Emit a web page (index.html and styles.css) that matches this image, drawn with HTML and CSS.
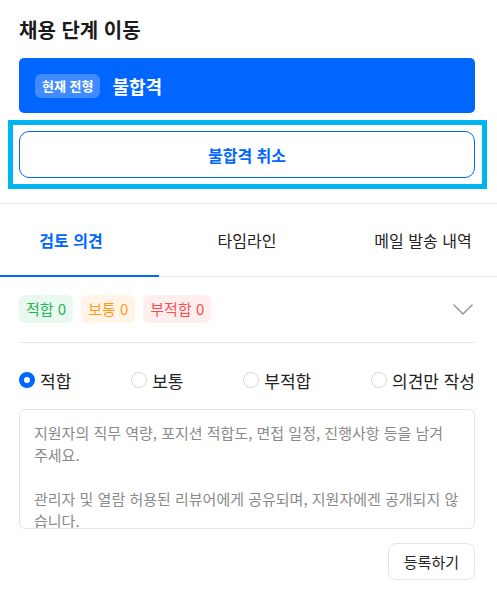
FILE: index.html
```html
<!DOCTYPE html>
<html lang="ko">
<head>
<meta charset="utf-8">
<title>채용 단계 이동</title>
<link rel="stylesheet" href="styles.css">
</head>
<body>
<section class="top">
  <h2 class="title">채용 단계 이동</h2>
  <div class="stage">
    <span class="badge">현재 전형</span>
    <span class="stage-name">불합격</span>
  </div>
  <div class="highlight">
    <button class="cancel" type="button">불합격 취소</button>
  </div>
</section>

<nav class="tabs">
  <div class="tab-row">
    <div class="tab active">검토 의견</div>
    <div class="tab">타임라인</div>
    <div class="tab">메일 발송 내역</div>
  </div>
</nav>

<section class="review">
  <div class="summary">
    <span class="chip chip-good">적합 0</span>
    <span class="chip chip-normal">보통 0</span>
    <span class="chip chip-bad">부적합 0</span>
    <svg class="chevron" width="24" height="24" viewBox="0 0 24 24" aria-hidden="true">
      <polyline points="3,8 12,17 21,8" fill="none" stroke="#9a9a9a" stroke-width="1.6" stroke-linecap="round" stroke-linejoin="round"/>
    </svg>
  </div>
  <hr class="divider">
  <div class="options">
    <label class="option"><input type="radio" name="opinion" checked><span>적합</span></label>
    <label class="option"><input type="radio" name="opinion"><span>보통</span></label>
    <label class="option"><input type="radio" name="opinion"><span>부적합</span></label>
    <label class="option"><input type="radio" name="opinion"><span>의견만 작성</span></label>
  </div>
  <div class="memo">지원자의 직무 역량, 포지션 적합도, 면접 일정, 진행사항 등을 남겨
주세요.

관리자 및 열람 허용된 리뷰어에게 공유되며, 지원자에겐 공개되지 않
습니다.</div>
  <div class="actions">
    <button class="submit" type="button">등록하기</button>
  </div>
</section>
</body>
</html>
```

FILE: styles.css
```css
* { box-sizing: border-box; }

body {
  margin: 0;
  background: #ffffff;
  color: #222222;
  font-family: "Noto Sans CJK KR", "Noto Sans", sans-serif;
}

.top {
  padding: 17px 22px 0 19px;
}

.title {
  margin: 0;
  font-size: 20px;
  line-height: 26px;
  font-weight: 700;
  color: #1a1a1a;
}

.stage {
  margin-top: 15px;
  height: 55px;
  background: #0066ff;
  border-radius: 5px;
  display: flex;
  align-items: center;
  gap: 12px;
  padding: 0 16px;
}

.badge {
  height: 24px;
  line-height: 24px;
  padding: 0 7px;
  border-radius: 6px;
  background: rgba(255, 255, 255, 0.25);
  color: #ffffff;
  font-size: 13px;
  font-weight: 700;
}

.stage-name {
  color: #ffffff;
  font-size: 18px;
  font-weight: 700;
}

.highlight {
  margin: 7px -12px 0 -11px;
  border: 5px solid #00b4ef;
  padding: 6px 7px 6px 6px;
}

.cancel {
  display: block;
  width: 100%;
  height: 47px;
  border: 1px solid #0066ff;
  border-radius: 10px;
  background: #ffffff;
  color: #0066ff;
  font-family: inherit;
  font-size: 16px;
  font-weight: 700;
}

.tabs {
  margin-top: 14px;
  border-top: 1px solid #e6e6e6;
  overflow: hidden;
}

.tab-row {
  display: flex;
  margin-left: -17px;
  border-bottom: 1px solid #e6e6e6;
}

.tab {
  flex: 0 0 176px;
  height: 73px;
  margin-bottom: -1px;
  border-bottom: 2px solid transparent;
  display: flex;
  align-items: center;
  justify-content: center;
  font-size: 16px;
  color: #222222;
}

.tab.active {
  color: #0066ff;
  font-weight: 700;
  border-bottom-color: #0066ff;
}

.review {
  padding: 0 22px 0 19px;
}

.summary {
  margin-top: 18px;
  height: 28px;
  display: flex;
  align-items: center;
  gap: 8px;
}

.chip {
  height: 28px;
  line-height: 28px;
  padding: 0 7px;
  border-radius: 6px;
  font-size: 15px;
}

.chip-good { background: #e9f9ef; color: #1fb655; }
.chip-normal { background: #fff4e6; color: #ff9a1a; }
.chip-bad { background: #ffeeee; color: #ff4d4f; }

.chevron {
  margin-left: auto;
  display: block;
}

.divider {
  margin: 19px 0 0;
  border: 0;
  border-top: 1px solid #e6e6e6;
  height: 0;
}

.options {
  margin-top: 26px;
  height: 22px;
  display: flex;
  justify-content: space-between;
  align-items: center;
}

.option {
  display: flex;
  align-items: center;
  gap: 5px;
  font-size: 17px;
  color: #222222;
}

.option input {
  appearance: none;
  -webkit-appearance: none;
  margin: 0;
  width: 16px;
  height: 16px;
  border: 1.5px solid #d9d9d9;
  border-radius: 50%;
  background: #ffffff;
}

.option input:checked {
  border: 5px solid #0066ff;
}

.memo {
  margin-top: 18px;
  height: 120px;
  overflow: hidden;
  border: 1px solid #e3e3e3;
  border-radius: 6px;
  padding: 12px 14px;
  font-size: 15px;
  line-height: 22px;
  color: #8a8a8a;
  white-space: pre;
}

.actions {
  margin-top: 14px;
  display: flex;
  justify-content: flex-end;
}

.submit {
  height: 37px;
  padding: 0 15px;
  border: 1px solid #e6e6e6;
  border-radius: 8px;
  background: #ffffff;
  color: #222222;
  font-family: inherit;
  font-size: 15px;
}
```
